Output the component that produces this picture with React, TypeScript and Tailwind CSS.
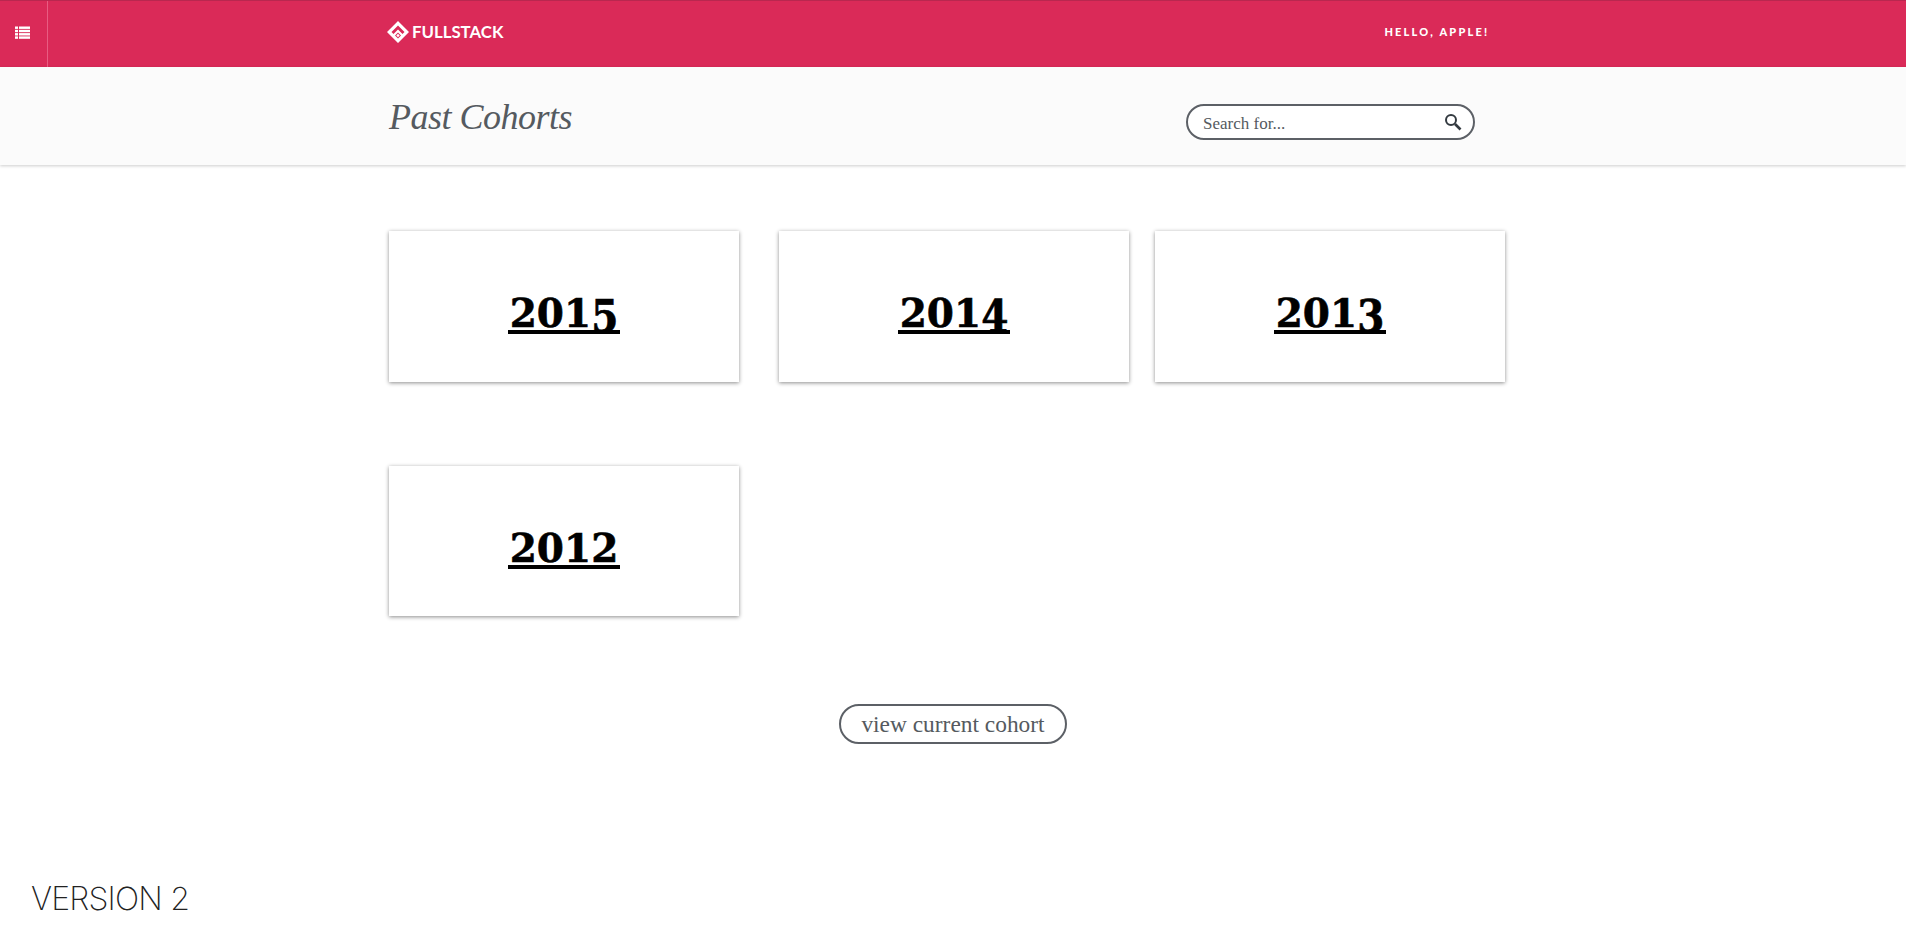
import React from "react";

const SERIF = "font-['Liberation_Serif',serif]";

/* old style figures: 3, 4 and 5 hang below the baseline */
const Year = ({ year }: { year: string }) => (
  <span className="inline-block border-b-[4px] border-black px-[2px] font-['DejaVu_Serif',serif] text-[39px] font-bold leading-[33px] text-black [-webkit-text-stroke:0.6px_black]">
    {year.split("").map((digit, index) => (
      <span
        key={index}
        className={
          "345".includes(digit)
            ? "inline-block origin-top scale-y-[1.15]"
            : "inline-block"
        }
      >
        {digit}
      </span>
    ))}
  </span>
);

const CohortCard = ({ year, className }: { year: string; className?: string }) => (
  <div
    className={`flex w-[350px] items-start justify-center bg-white pt-[66px] shadow-[0_1px_4px_rgba(0,0,0,0.45)] ${className ?? "h-[151px]"}`}
  >
    <Year year={year} />
  </div>
);

const ListIcon = () => (
  <svg width="15" height="13" viewBox="0 0 15 13" fill="white">
    <rect x="0" y="0.5" width="3" height="2.4" />
    <rect x="0" y="3.8" width="3" height="2.4" />
    <rect x="0" y="7.1" width="3" height="2.4" />
    <rect x="0" y="10.4" width="3" height="2.4" />
    <rect x="4" y="0.5" width="11" height="2.4" />
    <rect x="4" y="3.8" width="11" height="2.4" />
    <rect x="4" y="7.1" width="11" height="2.4" />
    <rect x="4" y="10.4" width="11" height="2.4" />
  </svg>
);

const Logo = () => (
  <svg width="24" height="24" viewBox="0 0 24 24" fill="white">
    <path d="M12 1 L23 12 L12 23 L1 12 Z M12 5.5 L5.5 12 L7.5 14 L12 9.5 L16.5 14 L18.5 12 Z" fillRule="evenodd" />
    <path d="M12 12.5 L15 15.5 L12 18.5 L9 15.5 Z" fill="#da2a58" />
    <path d="M12 13.8 L13.7 15.5 L12 17.2 L10.3 15.5 Z" />
  </svg>
);

const SearchIcon = () => (
  <svg width="18" height="18" viewBox="0 0 18 18" fill="none" stroke="#333a40">
    <circle cx="7" cy="7" r="5" strokeWidth="2" />
    <path d="M11 11 L16.5 16.5" strokeWidth="2.6" />
  </svg>
);

export default function App() {
  return (
    <div className="flex h-[947px] flex-col overflow-hidden bg-white">
      <header className="flex h-[67px] shrink-0 border-t border-[#b9274f] bg-[#da2a58]">
        <div className="flex w-[48px] items-center justify-center border-r border-[#e85c82] pb-[4px] pr-[2px]">
          <ListIcon />
        </div>
        <div className="flex flex-1 items-center pb-[4px] pl-[338px]">
          <Logo />
          <span className="ml-[2px] font-['Lato',sans-serif] text-[16.8px] font-bold text-white">
            FULLSTACK
          </span>
          <span className="ml-[881px] font-['Lato',sans-serif] text-[11px] font-black tracking-[0.2em] text-white">
            HELLO, APPLE!
          </span>
        </div>
      </header>

      <div className="flex h-[98px] shrink-0 items-start bg-[#fbfbfb] pl-[389px] shadow-[0_1px_3px_rgba(0,0,0,0.2)]">
        <h1 className={`${SERIF} mt-[28px] w-[797px] text-[36px] italic leading-[44px] tracking-[-0.5px] text-[#555a60]`}>
          Past Cohorts
        </h1>
        <div className="mt-[37px] flex h-[36px] w-[289px] items-center justify-between rounded-full border-2 border-[#5c6066] bg-white pl-[15px] pr-[11px]">
          <span className={`${SERIF} mt-[4px] text-[17px] text-[#555a60]`}>Search for...</span>
          <SearchIcon />
        </div>
      </div>

      <main className="flex flex-col pl-[389px] pt-[66px]">
        <div className="flex">
          <CohortCard year="2015" />
          <CohortCard year="2014" className="ml-[40px] h-[151px]" />
          <CohortCard year="2013" className="ml-[26px] h-[151px]" />
        </div>
        <div className="mt-[84px] flex">
          <CohortCard year="2012" className="h-[150px]" />
        </div>
        <button
          className={`${SERIF} ml-[450px] mt-[88px] h-[40px] w-[228px] rounded-full border-2 border-[#5c6066] pb-[1px] text-[23.4px] leading-[30px] text-[#555a60]`}
        >
          view current cohort
        </button>
      </main>

      <footer className="mt-auto pb-[30px] pl-[31px] font-['Inter',sans-serif] text-[32px] font-extralight leading-[36px] tracking-[-0.8px] text-[#222]">
        VERSION 2
      </footer>
    </div>
  );
}
